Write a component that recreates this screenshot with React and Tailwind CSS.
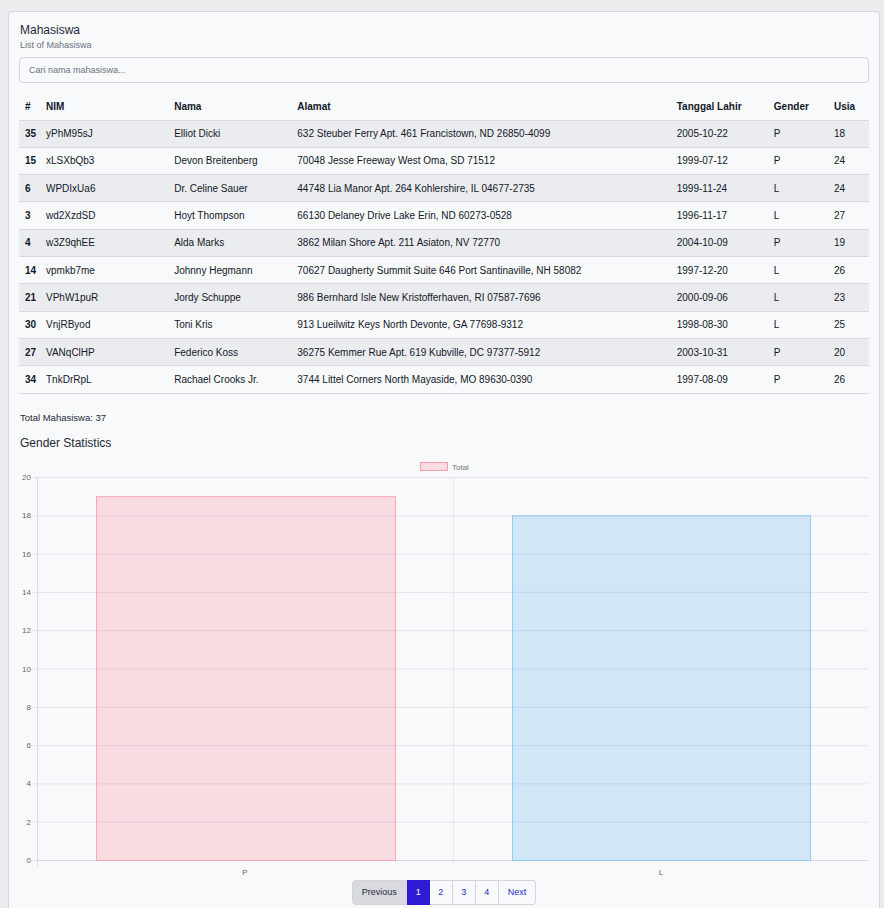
import React from "react";

const rows = [
  ["35", "yPhM95sJ", "Elliot Dicki", "632 Steuber Ferry Apt. 461 Francistown, ND 26850-4099", "2005-10-22", "P", "18"],
  ["15", "xLSXbQb3", "Devon Breitenberg", "70048 Jesse Freeway West Oma, SD 71512", "1999-07-12", "P", "24"],
  ["6", "WPDIxUa6", "Dr. Celine Sauer", "44748 Lia Manor Apt. 264 Kohlershire, IL 04677-2735", "1999-11-24", "L", "24"],
  ["3", "wd2XzdSD", "Hoyt Thompson", "66130 Delaney Drive Lake Erin, ND 60273-0528", "1996-11-17", "L", "27"],
  ["4", "w3Z9qhEE", "Alda Marks", "3862 Milan Shore Apt. 211 Asiaton, NV 72770", "2004-10-09", "P", "19"],
  ["14", "vpmkb7me", "Johnny Hegmann", "70627 Daugherty Summit Suite 646 Port Santinaville, NH 58082", "1997-12-20", "L", "26"],
  ["21", "VPhW1puR", "Jordy Schuppe", "986 Bernhard Isle New Kristofferhaven, RI 07587-7696", "2000-09-06", "L", "23"],
  ["30", "VnjRByod", "Toni Kris", "913 Lueilwitz Keys North Devonte, GA 77698-9312", "1998-08-30", "L", "25"],
  ["27", "VANqClHP", "Federico Koss", "36275 Kemmer Rue Apt. 619 Kubville, DC 97377-5912", "2003-10-31", "P", "20"],
  ["34", "TnkDrRpL", "Rachael Crooks Jr.", "3744 Littel Corners North Mayaside, MO 89630-0390", "1997-08-09", "P", "26"],
];

const headers = [
  { label: "#", w: "w-[21px]" },
  { label: "NIM", w: "w-[128px]" },
  { label: "Nama", w: "w-[123px]" },
  { label: "Alamat", w: "w-[379px]" },
  { label: "Tanggal Lahir", w: "w-[97px]" },
  { label: "Gender", w: "w-[60px]" },
  { label: "Usia", w: "w-[41px]" },
];

// chart geometry (svg coords)
const left = 18;
const right = 849;
const top = 19;
const bottom = 402;
const yFor = (v) => bottom - (v / 20) * (bottom - top);

const GenderChart = () => {
  const ticks = [0, 2, 4, 6, 8, 10, 12, 14, 16, 18, 20];
  return (
    <svg width="850" height="420" viewBox="0 0 850 420" className="block">
      {/* legend */}
      <rect x="401.5" y="4.5" width="27" height="8" fill="rgba(255,99,132,0.2)" stroke="#f59bb0" strokeWidth="1" />
      <text x="433" y="11.5" fontSize="8" fill="#777" fontFamily="Liberation Sans, Arial, sans-serif">
        Total
      </text>

      {/* horizontal grid */}
      {ticks.map((t) => (
        <g key={t}>
          <line x1={left - 4} x2={right} y1={yFor(t) + 0.5} y2={yFor(t) + 0.5} stroke="#e4e5e8" strokeWidth="1" />
          <text
            x="12"
            y={yFor(t) + 3}
            fontSize="8"
            textAnchor="end"
            fill="#666"
            fontFamily="Liberation Sans, Arial, sans-serif"
          >
            {t}
          </text>
        </g>
      ))}
      <line x1={left} x2={right} y1={bottom + 0.5} y2={bottom + 0.5} stroke="#d6d7da" strokeWidth="1" />

      {/* vertical grid */}
      <line x1={left + 0.5} x2={left + 0.5} y1={top} y2={bottom + 6} stroke="#dcdde0" strokeWidth="1" />
      <line x1="434.5" x2="434.5" y1={top} y2={bottom + 6} stroke="#e8e9eb" strokeWidth="1" />

      {/* bars */}
      <rect
        x="77.5"
        y={yFor(19) + 0.5}
        width="299"
        height={bottom - yFor(19)}
        fill="rgba(255,99,132,0.2)"
        stroke="#f7a6b8"
        strokeWidth="1"
      />
      <rect
        x="493.5"
        y={yFor(18) + 0.5}
        width="298"
        height={bottom - yFor(18)}
        fill="rgba(54,162,235,0.2)"
        stroke="#8fcaf1"
        strokeWidth="1"
      />

      {/* x labels */}
      <text x="226" y="417" fontSize="8" textAnchor="middle" fill="#666" fontFamily="Liberation Sans, Arial, sans-serif">
        P
      </text>
      <text x="642" y="417" fontSize="8" textAnchor="middle" fill="#666" fontFamily="Liberation Sans, Arial, sans-serif">
        L
      </text>
    </svg>
  );
};

const Pagination = () => {
  const pages = ["1", "2", "3", "4"];
  return (
    <div className="flex justify-center">
      <div className="flex h-[25px] text-[9px]">
        <button className="px-[9px] bg-[#d9dadf] text-[#1f2937] border border-[#d3d4d8] rounded-l-[4px]">
          Previous
        </button>
        {pages.map((p) => (
          <button
            key={p}
            className={
              p === "1"
                ? "w-[23px] bg-[#2f1bd6] text-white border border-[#2f1bd6]"
                : "w-[23px] bg-[#f8f9fb] text-[#2b1fc9] border border-l-0 border-[#d3d4d8]"
            }
          >
            {p}
          </button>
        ))}
        <button className="px-[9px] bg-[#f8f9fb] text-[#2b1fc9] border border-l-0 border-[#d3d4d8] rounded-r-[4px]">
          Next
        </button>
      </div>
    </div>
  );
};

export default function App() {
  return (
    <div className="min-h-[908px] bg-[#ebecee] pt-[11px] pl-[8px] pr-[4px] font-['Liberation_Sans',Arial,sans-serif]">
      <div className="bg-[#f8f9fb] border border-[#d4d5d9] rounded-[4px] px-[10px] pt-[10px] pb-[12px]">
        <h1 className="ml-[1px] text-[12px] leading-[16px] text-[#1f2937]">Mahasiswa</h1>
        <p className="ml-[1px] mt-[1px] text-[9px] leading-[12px] text-[#6b7280]">List of Mahasiswa</p>

        <input
          type="text"
          placeholder="Cari nama mahasiswa..."
          className="mt-[6px] w-full h-[26px] px-[9px] text-[9px] bg-[#f8f9fb] border border-[#d4d5d9] rounded-[4px] placeholder:text-[#6b7280] outline-none"
        />

        <table className="mt-[10px] w-[850px] table-fixed border-collapse text-[10px] text-[#111827]">
          <thead>
            <tr className="border-b border-[#d8d9dc]">
              {headers.map((h) => (
                <th key={h.label} className={`${h.w} h-[27px] px-[6px] text-left font-bold`}>
                  {h.label}
                </th>
              ))}
            </tr>
          </thead>
          <tbody>
            {rows.map((r, i) => (
              <tr key={r[0]} className={`border-b border-[#d8d9dc] ${i % 2 === 0 ? "bg-[#ebecef]" : ""}`}>
                {r.map((c, j) => (
                  <td key={j} className={`h-[27.33px] px-[6px] whitespace-nowrap ${j === 0 ? "font-bold" : ""}`}>
                    {c}
                  </td>
                ))}
              </tr>
            ))}
          </tbody>
        </table>

        <p className="ml-[1px] mt-[18px] text-[9.5px] leading-[12px] text-[#1f2937]">Total Mahasiswa: 37</p>
        <h2 className="ml-[1px] mt-[11px] text-[12px] leading-[16px] text-[#1f2937]">Gender Statistics</h2>

        <div className="mt-[7px]">
          <GenderChart />
        </div>

        <div className="mt-[2px]">
          <Pagination />
        </div>
      </div>
    </div>
  );
}
